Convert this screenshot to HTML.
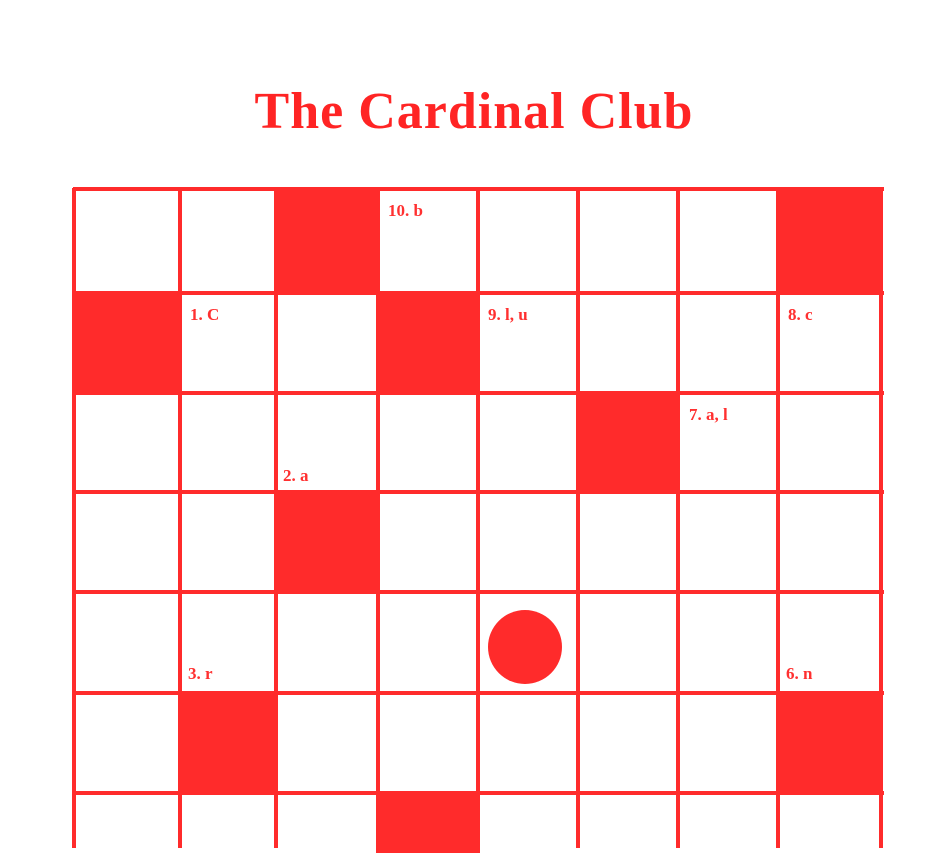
<!DOCTYPE html>
<html><head><meta charset="utf-8"><style>
html,body{margin:0;padding:0}
body{width:948px;height:845px;background:#fff;position:relative;overflow:hidden;font-family:"Liberation Serif",serif;color:#ff2b2b}
.t{position:absolute;left:0;width:948px;top:82px;text-align:center;font-size:52px;font-weight:bold;letter-spacing:1px;color:#ff2424}
.v{position:absolute;top:188px;height:660px;width:4px;background:#ff2b2b}
.h{position:absolute;left:73px;width:811px;height:4px;background:#ff2b2b}
.f{position:absolute;background:#ff2b2b}
.l{position:absolute;font-size:17px;font-weight:bold;color:#ff3030}
</style></head><body>
<div class="t">The Cardinal Club</div>
<div class="v" style="left:72px"></div><div class="v" style="left:178px"></div><div class="v" style="left:274px"></div><div class="v" style="left:376px"></div><div class="v" style="left:476px"></div><div class="v" style="left:576px"></div><div class="v" style="left:676px"></div><div class="v" style="left:776px"></div><div class="v" style="left:879px"></div>
<div class="h" style="top:187px"></div><div class="h" style="top:291px"></div><div class="h" style="top:391px"></div><div class="h" style="top:490px"></div><div class="h" style="top:590px"></div><div class="h" style="top:691px"></div><div class="h" style="top:791px"></div>
<div class="f" style="left:276px;top:189px;width:104px;height:106px"></div>
<div class="f" style="left:778px;top:189px;width:105px;height:106px"></div>
<div class="f" style="left:73px;top:293px;width:109px;height:102px"></div>
<div class="f" style="left:378px;top:293px;width:102px;height:102px"></div>
<div class="f" style="left:578px;top:393px;width:102px;height:101px"></div>
<div class="f" style="left:276px;top:492px;width:104px;height:102px"></div>
<div class="f" style="left:178px;top:693px;width:100px;height:102px"></div>
<div class="f" style="left:778px;top:693px;width:105px;height:102px"></div>
<div class="f" style="left:376px;top:793px;width:104px;height:60px"></div>
<div class="f" style="left:488px;top:610px;width:74px;height:74px;border-radius:50%"></div>
<div class="l" style="left:388px;top:201px">10. b</div>
<div class="l" style="left:190px;top:305px">1. C</div>
<div class="l" style="left:488px;top:305px">9. l, u</div>
<div class="l" style="left:788px;top:305px">8. c</div>
<div class="l" style="left:689px;top:405px">7. a, l</div>
<div class="l" style="left:283px;top:466px">2. a</div>
<div class="l" style="left:188px;top:664px">3. r</div>
<div class="l" style="left:786px;top:664px">6. n</div>
</body></html>
